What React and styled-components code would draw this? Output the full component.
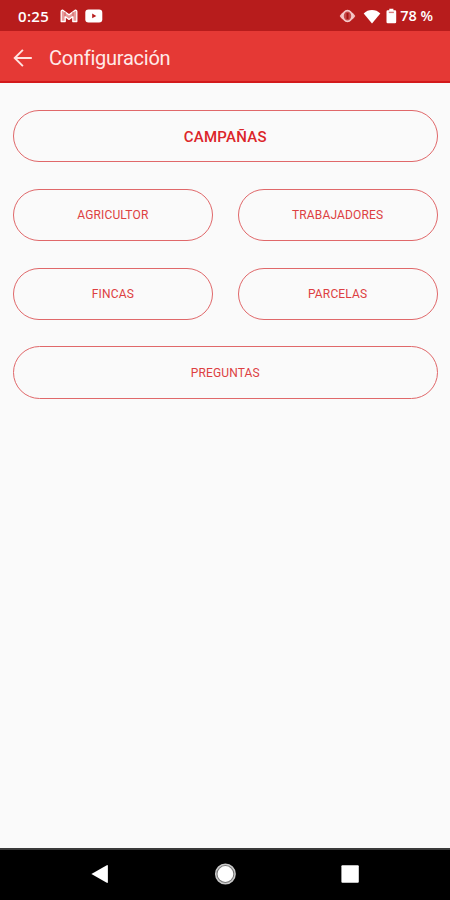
import React from "react";
import styled, { createGlobalStyle } from "styled-components";

export default function App() {
  return (
    <>
      <GlobalStyle />
      <Screen>
        <StatusBar>
          <Clock>0:25</Clock>
          <MailIcon />
          <VideoIcon />
          <Spacer />
          <EyeIcon />
          <WifiIcon />
          <BatteryIcon />
          <Battery>78 %</Battery>
        </StatusBar>

        <AppBar>
          <BackButton aria-label="Atrás">
            <BackIcon />
          </BackButton>
          <Title>Configuración</Title>
        </AppBar>

        <Menu>
          <MenuButton $wide $large>
            CAMPAÑAS
          </MenuButton>
          <MenuButton>AGRICULTOR</MenuButton>
          <MenuButton>TRABAJADORES</MenuButton>
          <MenuButton>FINCAS</MenuButton>
          <MenuButton>PARCELAS</MenuButton>
          <MenuButton $wide>PREGUNTAS</MenuButton>
        </Menu>

        <NavBar>
          <NavButton aria-label="Volver">
            <svg width="24" height="24" viewBox="0 0 24 24">
              <path d="M3.4 12 18.8 3.2Q19.9 2.8 19.9 4V20Q19.9 21.2 18.8 20.8Z" fill="#fff" />
            </svg>
          </NavButton>
          <NavButton aria-label="Inicio">
            <svg width="24" height="24" viewBox="0 0 24 24">
              <circle cx="12.4" cy="12" r="9.7" fill="#777" stroke="#c9c9c9" strokeWidth="1.5" />
              <circle cx="12.4" cy="12" r="7.9" fill="#fff" />
            </svg>
          </NavButton>
          <NavButton aria-label="Recientes">
            <svg width="24" height="24" viewBox="0 0 24 24">
              <rect x="3.4" y="3.3" width="17.4" height="17.4" rx="1" fill="#fff" />
            </svg>
          </NavButton>
        </NavBar>
      </Screen>
    </>
  );
}

// Icons
function MailIcon() {
  return (
    <StatusIcon width="18" height="14" viewBox="0 0 18 14" $left={11}>
      <path
        d="M1.2 2.5Q1.2 1 2.8 1.2L9 5.8 15.2 1.2Q16.8 1 16.8 2.5V12.5H12.8V7.6L9 10.4 5.2 7.6V12.5H1.2Z"
        fill="#e99a9a"
        stroke="#fff"
        strokeWidth="1.3"
        strokeLinejoin="round"
      />
      <path d="M5 2.9V7.4M13 2.9V7.4" stroke="#c95050" strokeWidth="0.8" />
    </StatusIcon>
  );
}

function VideoIcon() {
  return (
    <StatusIcon width="18" height="14" viewBox="0 0 18 14" $left={7}>
      <rect x="0.3" y="0.6" width="17" height="12.8" rx="3.2" fill="#fff" />
      <path d="M7.2 4.5V9.3L11.3 6.9Z" fill="#b71c1c" />
    </StatusIcon>
  );
}

function EyeIcon() {
  return (
    <StatusIcon width="17" height="14" viewBox="0 0 17 14">
      <path
        d="M0.7 7Q2.2 4.1 4.4 2.9V11.1Q2.2 9.9 0.7 7ZM16.3 7Q14.8 4.1 12.6 2.9V11.1Q14.8 9.9 16.3 7Z"
        fill="#f3bcbc"
      />
      <ellipse cx="8.5" cy="7" rx="4.6" ry="5.4" fill="#c64848" stroke="#f6caca" strokeWidth="1.7" />
      <path d="M8.5 4V10" stroke="#a51212" strokeWidth="2" />
    </StatusIcon>
  );
}

function WifiIcon() {
  return (
    <StatusIcon width="18" height="15" viewBox="0 0 18 15" $left={7}>
      <path d="M0.7 4.4Q4.2 1 9 1T17.3 4.4L9 14.5Z" fill="#fff" />
    </StatusIcon>
  );
}

function BatteryIcon() {
  return (
    <StatusIcon width="11" height="16" viewBox="0 0 11 16" $left={5}>
      <path
        d="M3.3 0.8H7.4V2.2H9Q10.2 2.2 10.2 3.4V14Q10.2 15.2 9 15.2H1.7Q0.5 15.2 0.5 14V3.4Q0.5 2.2 1.7 2.2H3.3Z"
        fill="#fff"
      />
      <path d="M2.8 4.4H7.9" stroke="#d98080" strokeWidth="1.4" />
    </StatusIcon>
  );
}

function BackIcon() {
  return (
    <svg width="20" height="20" viewBox="0 0 20 20">
      <path
        d="M18.8 10H2M9.9 1.8 1.7 10 9.9 18.2"
        fill="none"
        stroke="#ffe3e1"
        strokeWidth="1.9"
      />
    </svg>
  );
}

const GlobalStyle = createGlobalStyle`
  * {
    box-sizing: border-box;
  }

  body {
    margin: 0;
    background: #fafafa;
    font-family: Roboto, "Liberation Sans", sans-serif;
  }

  button {
    padding: 0;
    border: none;
    background: none;
    font-family: inherit;
  }

  svg {
    display: block;
  }
`;

const Screen = styled.div`
  display: flex;
  flex-direction: column;
  width: 450px;
  height: 900px;
  background: #fafafa;
`;

const StatusBar = styled.div`
  display: flex;
  align-items: center;
  height: 31px;
  padding: 1px 17px 0 18px;
  background: #b71c1c;
  color: #fff;
`;

const Clock = styled.span`
  font-family: "Open Sans", Roboto, sans-serif;
  font-weight: 600;
  font-size: 15px;
  line-height: 20px;
  letter-spacing: 0.3px;
`;

const Battery = styled.span`
  margin-left: 3px;
  font-family: "Open Sans", Roboto, sans-serif;
  font-weight: 600;
  font-size: 14.5px;
  line-height: 20px;
`;

const StatusIcon = styled.svg`
  flex-shrink: 0;
  margin-left: ${({ $left }) => $left || 0}px;
`;

const Spacer = styled.div`
  flex: 1;
`;

const AppBar = styled.header`
  display: flex;
  align-items: center;
  height: 52px;
  padding: 3px 13px 0;
  border-bottom: 2px solid #d3191b;
  background: #e53935;
`;

const BackButton = styled.button`
  width: 20px;
  height: 20px;
`;

const Title = styled.h1`
  margin: 0 0 0 16px;
  font-weight: 400;
  font-size: 20px;
  line-height: 28px;
  letter-spacing: -0.25px;
  color: #ffe9e8;
`;

const Menu = styled.main`
  display: grid;
  grid-template-columns: 1fr 1fr;
  grid-auto-rows: 52.25px;
  align-content: start;
  gap: 26.5px 25px;
  flex: 1;
  padding: 27px 12.5px 0 13px;
`;

const MenuButton = styled.button`
  grid-column: ${({ $wide }) => ($wide ? "1 / -1" : "auto")};
  padding-top: 1px;
  border: 1px solid #e0686a;
  border-radius: 27px;
  font-weight: ${({ $large }) => ($large ? 500 : 400)};
  font-size: ${({ $large }) => ($large ? "15px" : "12px")};
  letter-spacing: ${({ $large }) => ($large ? "0.25px" : "0.15px")};
  color: ${({ $large }) => ($large ? "#dc2529" : "#dd3f42")};
`;

const NavBar = styled.nav`
  display: flex;
  align-items: center;
  justify-content: center;
  gap: 101px;
  height: 52px;
  padding-bottom: 2px;
  border-top: 2px solid #3a3a3a;
  background: #000;
`;

const NavButton = styled.button`
  width: 24px;
  height: 24px;
`;
